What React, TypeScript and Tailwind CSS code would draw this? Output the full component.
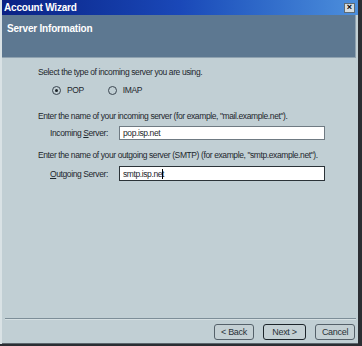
import React from "react";

const font = { fontFamily: '"Liberation Sans", Arial, sans-serif' };

const Radio = ({ checked, label }: { checked?: boolean; label: string }) => (
  <label className="flex items-center gap-[6px]">
    <span className="w-[9px] h-[9px] rounded-full border border-[#3b4650] bg-[#c1cfd4] flex items-center justify-center">
      {checked && <span className="w-[3px] h-[3px] rounded-full bg-[#1c2328]" />}
    </span>
    <span>{label}</span>
  </label>
);

const Button = ({ children, focused }: { children: React.ReactNode; focused?: boolean }) => (
  <button
    className={
      "h-[16px] rounded-[3px] bg-[#c4d0d4] text-[9px] leading-none text-[#2a3238] flex items-center justify-center tracking-[-0.3px] " +
      (focused ? "w-[43px] border-[1.5px] border-[#1d252b]" : "w-[40px] border border-[#55616a]")
    }
  >
    {children}
  </button>
);

export default function App() {
  return (
    <div className="w-[362px] h-[346px] flex bg-[#2b2e33] leading-[12px]" style={font}>
      <div className="w-[358px] h-[344px] flex flex-col bg-[#c1cfd4] border-l-[2px] border-[#d9e2e5]">
        {/* title bar */}
        <div className="h-[15px] flex items-center justify-between bg-gradient-to-r from-[#0a2184] via-[#1a48b8] to-[#4d8fdc] pl-[2px] pr-[3px]">
          <span className="text-white font-bold text-[10px] tracking-[-0.2px]">Account Wizard</span>
          <span className="w-[11px] h-[10px] bg-[#d6dde0] border border-[#5d6b74] flex items-center justify-center text-[9px] font-bold leading-none text-black">
            ×
          </span>
        </div>
        {/* header */}
        <div className="h-[43px] mr-[2px] bg-[#5d7891] border-b border-r border-[#8fa2b0] pl-[5px] pt-[8px]">
          <div className="text-white font-bold text-[10px] leading-[12px] tracking-[-0.2px]">Server Information</div>
        </div>
        {/* body */}
        <div className="flex-1 flex flex-col text-[8.5px] text-[#1e272d] tracking-[-0.4px] pl-[36px] pt-[8px]">
          <p className="h-[12px]">Select the type of incoming server you are using.</p>
          <div className="flex gap-[24px] pl-[14px] mt-[6px] h-[12px] items-center">
            <Radio checked label="POP" />
            <Radio label="IMAP" />
          </div>
          <p className="mt-[14px] h-[12px]">
            Enter the name of your incoming server (for example, "mail.example.net").
          </p>
          <div className="flex items-center mt-[4px] pl-[12px]">
            <span className="w-[69px]">
              Incoming <u>S</u>erver:
            </span>
            <div className="w-[206px] h-[14px] bg-white border border-[#6f7a82] pl-[3px] flex items-center">
              pop.isp.net
            </div>
          </div>
          <p className="mt-[9px] h-[12px]">
            Enter the name of your outgoing server (SMTP) (for example, "smtp.example.net").
          </p>
          <div className="flex items-center mt-[5px] pl-[12px]">
            <span className="w-[69px]">
              <u>O</u>utgoing Server:
            </span>
            <div className="w-[206px] h-[15px] bg-white border-[1.5px] border-[#2b3338] pl-[3px] flex items-center">
              smtp.isp.net<span className="w-[1px] h-[10px] bg-black ml-[-2px]" />
            </div>
          </div>
        </div>
        {/* footer */}
        <div className="h-[1px] bg-[#7d8e98] ml-[3px] mr-[2px]" />
        <div className="h-[1px] bg-[#d6e0e3] ml-[3px] mr-[2px]" />
        <div className="h-[24px] flex items-start justify-end gap-[9px] pr-[3px] pt-[4px] border-b border-[#5c666d]">
          <Button>&lt; Back</Button>
          <Button focused>Next &gt;</Button>
          <Button>Cancel</Button>
        </div>
      </div>
    </div>
  );
}
